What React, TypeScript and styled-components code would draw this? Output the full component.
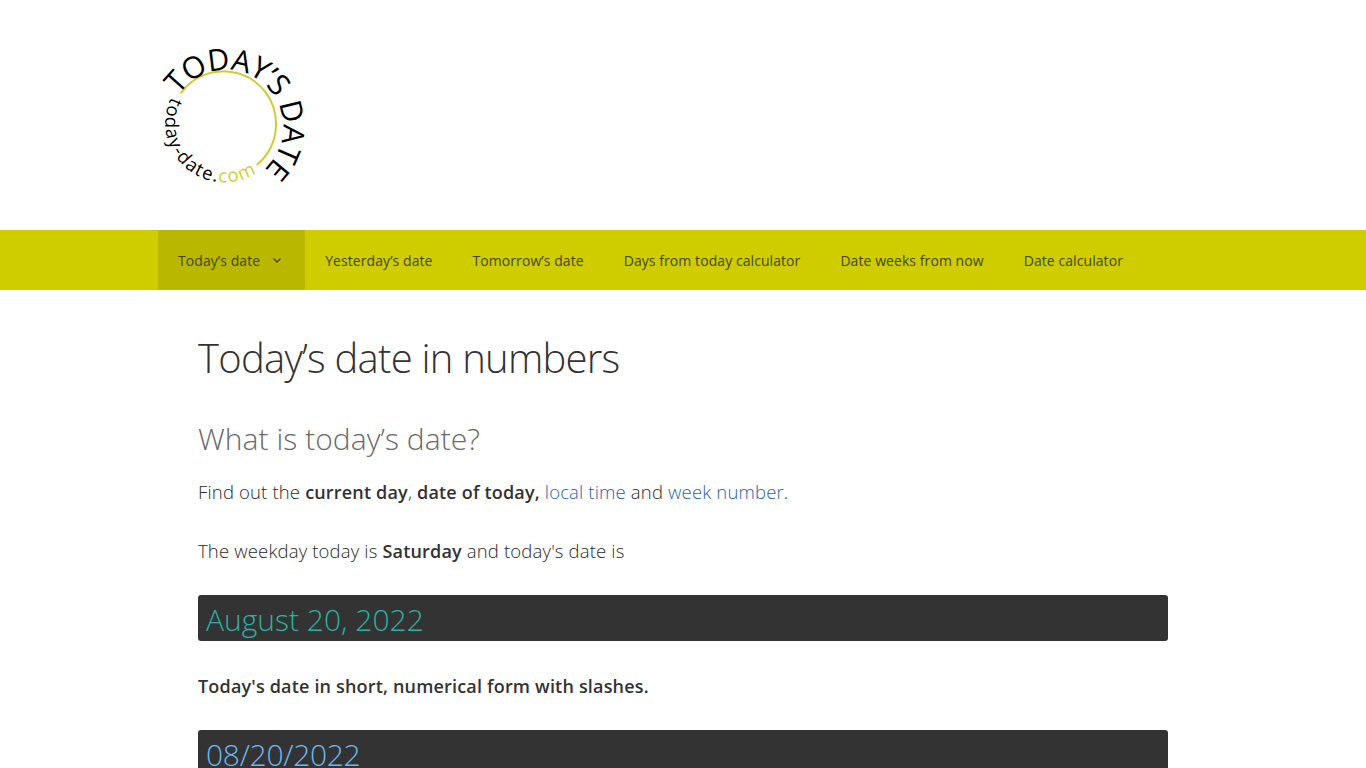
import React from "react";
import styled, { createGlobalStyle } from "styled-components";

const Global = createGlobalStyle`
  html, body { margin: 0; padding: 0; background: #fff; height: 768px; overflow: hidden; }
  body { font-family: "Open Sans", "Noto Sans", sans-serif; font-weight: 300; color: #333; }
`;

const Header = styled.header`
  height: 230px;
  padding: 0 158px;
  box-sizing: border-box;
  display: flex;
  align-items: flex-start;
`;

const Logo = styled.svg`
  display: block;
  width: 160px;
  height: 230px;
`;

const NavBar = styled.nav`
  height: 60px;
  background: #cfcd00;
  padding: 0 158px;
  display: flex;
`;

const NavItem = styled.a<{ $active?: boolean }>`
  display: flex;
  align-items: center;
  gap: 12px;
  padding: 0 20px;
  height: 60px;
  font-size: 14px;
  font-weight: 400;
  letter-spacing: 0.07px;
  color: #45450f;
  white-space: nowrap;
  background: ${(p) => (p.$active ? "#b9b700" : "transparent")};
`;

const Chevron = styled.svg`
  width: 10px;
  height: 10px;
  margin-right: 3px;
`;

const Main = styled.main`
  width: 970px;
  margin-left: 198px;
  padding-top: 40px;
`;

const Title = styled.h1`
  margin: 0;
  font-size: 40px;
  line-height: 56px;
  font-weight: 300;
  letter-spacing: -0.76px;
  color: #333;
`;

const Subtitle = styled.h2`
  margin: 32px 0 0;
  font-size: 30px;
  line-height: 42px;
  font-weight: 300;
  letter-spacing: 0.05px;
  color: #6a6a6a;
`;

const Para = styled.p<{ $gap?: number }>`
  margin: ${(p) => p.$gap ?? 17}px 0 0;
  font-size: 18.5px;
  line-height: 30px;
  letter-spacing: 0.16px;
  color: #2a2a2a;
  strong { font-weight: 600; font-size: 18px; letter-spacing: 0.18px; color: #333; }
  a { color: #2763ab; }
`;

const DateBar = styled.div<{ $color: string; $gap: number; $spacing: number }>`
  margin-top: ${(p) => p.$gap}px;
  height: 46px;
  background: #333;
  border-radius: 3px;
  padding-left: 8px;
  font-size: 30px;
  line-height: 50px;
  font-weight: 300;
  letter-spacing: ${(p) => p.$spacing}px;
  color: ${(p) => p.$color};
  overflow: hidden;
`;

export default function App() {
  return (
    <>
      <Global />
      <Header>
        <Logo viewBox="158 0 160 230">
          <defs>
            <path id="titleArc" d="M 178.7 95.1 A 57 57 0 1 1 235.9 183" fill="none" />
            <path id="lowerArc" d="M 171.4 97.2 A 59 59 0 0 0 275 153.5" fill="none" />
          </defs>
          <path d="M 180.7 93.3 A 52.5 52.5 0 0 1 276 124 A 52 52 0 0 1 256.7 165" fill="none" stroke="#cfcd33" strokeWidth="2" />
          <text fontFamily="Open Sans, sans-serif" fontSize="30" fontWeight="500" fill="#000" letterSpacing="-0.7">
            <textPath href="#titleArc">TODAY’S DATE</textPath>
          </text>
          <text fontFamily="Open Sans, sans-serif" fontSize="18.5" fontWeight="400" fill="#000" letterSpacing="1.4">
            <textPath href="#lowerArc">today-date.<tspan fill="#cfcd33">com</tspan></textPath>
          </text>
        </Logo>
      </Header>
      <NavBar>
        <NavItem $active>
          Today’s date
          <Chevron viewBox="0 0 10 10"><path d="M1.5 3.5 L5 7 L8.5 3.5" fill="none" stroke="#45450f" strokeWidth="1.4" /></Chevron>
        </NavItem>
        <NavItem>Yesterday’s date</NavItem>
        <NavItem>Tomorrow’s date</NavItem>
        <NavItem>Days from today calculator</NavItem>
        <NavItem>Date weeks from now</NavItem>
        <NavItem>Date calculator</NavItem>
      </NavBar>
      <Main>
        <Title>Today’s date in numbers</Title>
        <Subtitle>What is today’s date?</Subtitle>
        <Para>Find out the <strong>current day</strong>, <strong>date of today,</strong> <a>local time</a> and <a>week number</a>.</Para>
        <Para $gap={29}>The weekday today is <strong>Saturday</strong> and today's date is</Para>
        <DateBar $color="#2bb0a5" $gap={29} $spacing={0}>August 20, 2022</DateBar>
        <Para $gap={30}><strong>Today's date in short, numerical form with slashes.</strong></Para>
        <DateBar $color="#6cb8f0" $gap={29} $spacing={-0.3}>08/20/2022</DateBar>
      </Main>
    </>
  );
}
